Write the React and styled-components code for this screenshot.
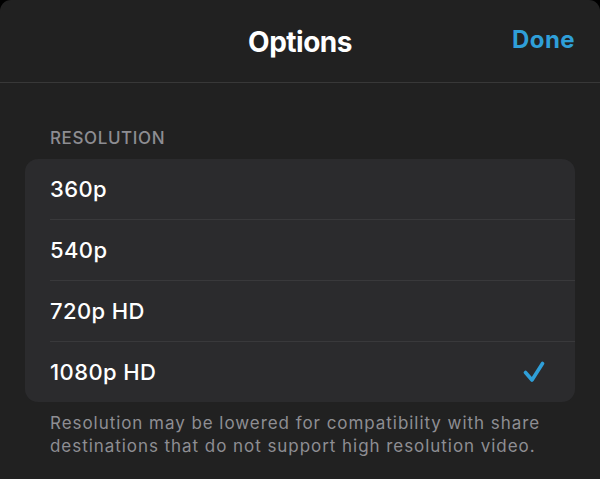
import styled, { createGlobalStyle } from "styled-components";
import { useState } from "react";

const Global = createGlobalStyle`
  html, body { margin: 0; padding: 0; background: #000; }
  body { font-family: Inter, "Noto Sans", "Liberation Sans", sans-serif; -webkit-font-smoothing: antialiased; }
`;

const Sheet = styled.div`
  width: 600px;
  height: 479px;
  background: #212121;
  border-radius: 11px 11px 0 0;
  overflow: hidden;
  display: flex;
  flex-direction: column;
`;

const Header = styled.header`
  height: 82px;
  border-bottom: 1px solid #383838;
  display: grid;
  grid-template-columns: 1fr auto 1fr;
  align-items: center;
  padding: 0 25px;
`;

const Title = styled.h1`
  grid-column: 2;
  margin: 0;
  padding-top: 2px;
  font-size: 28px;
  line-height: 32px;
  font-weight: 700;
  color: #fff;
  letter-spacing: -0.5px;
`;

const DoneButton = styled.button`
  grid-column: 3;
  justify-self: end;
  background: none;
  border: none;
  padding: 0;
  margin-top: -2px;
  font: inherit;
  font-size: 24px;
  line-height: 28px;
  font-weight: 700;
  color: #2f9fd8;
  cursor: pointer;
  letter-spacing: 0.4px;
`;

const Body = styled.main`
  padding: 45px 25px 0;
`;

const SectionLabel = styled.div`
  padding-left: 25px;
  font-size: 17px;
  line-height: 20px;
  font-weight: 500;
  color: #8d8d92;
  letter-spacing: 0.6px;
  margin-bottom: 11px;
`;

const Card = styled.ul`
  list-style: none;
  margin: 0;
  padding: 0;
  background: #2b2b2d;
  border-radius: 13px;
`;

const Row = styled.li`
  height: 60px;
  margin-left: 25px;
  padding-right: 30px;
  display: flex;
  align-items: center;
  justify-content: space-between;
  font-size: 22px;
  font-weight: 500;
  letter-spacing: 0.4px;
  color: #fff;
  border-bottom: ${(p) => (p.last ? "none" : "1px solid #39393b")};
  cursor: pointer;
`;

const Footnote = styled.p`
  margin: 10px 0 0;
  padding: 0 25px;
  font-size: 17px;
  line-height: 23px;
  letter-spacing: 0.95px;
  color: #8e8e93;
`;

const Check = () => (
  <svg width="22" height="22" viewBox="0 0 22 22" fill="none">
    <path d="M2.5 11.5 L9 19 L19.5 2.5" stroke="#2f9fd8" strokeWidth="3.6" strokeLinecap="round" strokeLinejoin="round" />
  </svg>
);

const options = ["360p", "540p", "720p HD", "1080p HD"];

export default function App() {
  const [selected, setSelected] = useState("1080p HD");
  return (
    <>
      <Global />
      <Sheet>
        <Header>
          <Title>Options</Title>
          <DoneButton>Done</DoneButton>
        </Header>
        <Body>
          <SectionLabel>RESOLUTION</SectionLabel>
          <Card>
            {options.map((o, i) => (
              <Row key={o} last={i === options.length - 1} onClick={() => setSelected(o)}>
                {o}
                {selected === o && <Check />}
              </Row>
            ))}
          </Card>
          <Footnote>
            Resolution may be lowered for compatibility with share destinations that do not support high resolution video.
          </Footnote>
        </Body>
      </Sheet>
    </>
  );
}
